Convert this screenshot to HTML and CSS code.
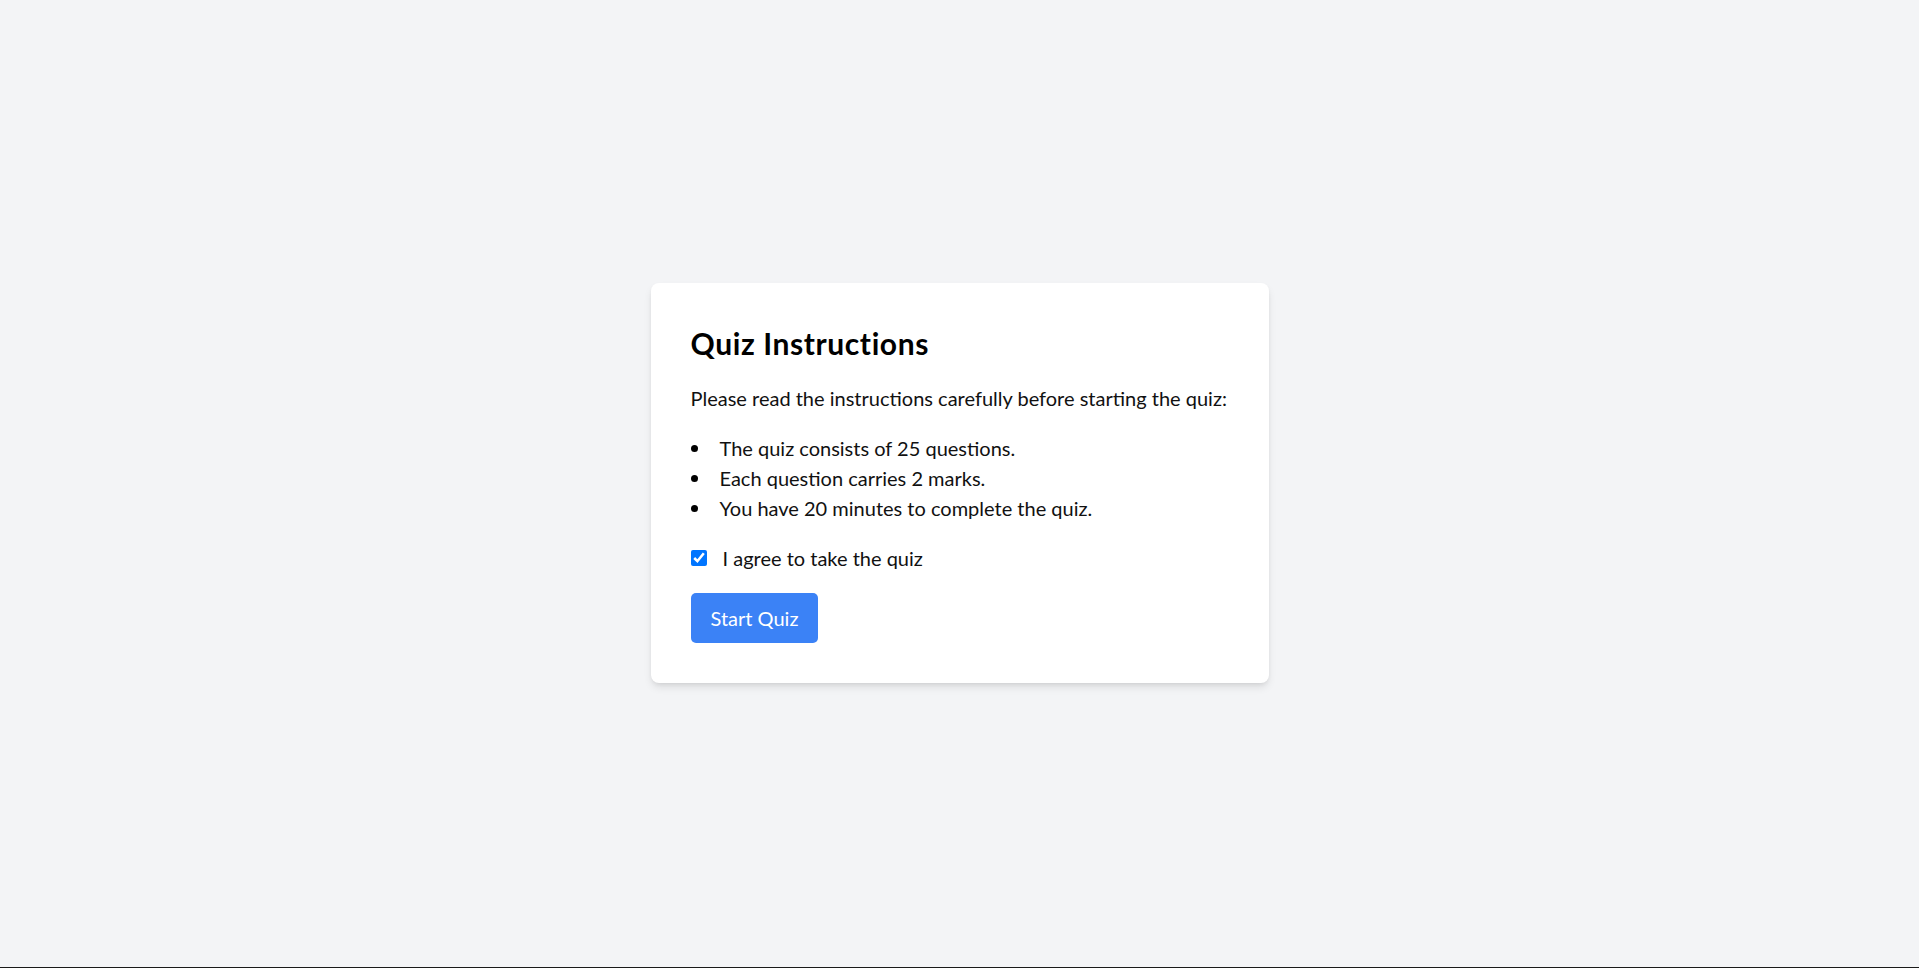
FILE: index.html
```html
<!DOCTYPE html>
<html lang="en">
<head>
<meta charset="utf-8">
<title>Quiz Instructions</title>
<link rel="stylesheet" href="styles.css">
</head>
<body>
  <main class="page">
    <section class="card">
      <h1 class="title">Quiz Instructions</h1>
      <p class="intro">Please read the instructions carefully before starting the quiz:</p>
      <ul class="rules">
        <li class="rule">The quiz consists of 25 questions.</li>
        <li class="rule">Each question carries 2 marks.</li>
        <li class="rule">You have 20 minutes to complete the quiz.</li>
      </ul>
      <label class="agree">
        <input type="checkbox" class="agree-box" checked>
        <span>I agree to take the quiz</span>
      </label>
      <button class="start-btn" type="button">Start Quiz</button>
    </section>
  </main>
</body>
</html>
```

FILE: styles.css
```css
* { box-sizing: border-box; }

html, body {
  margin: 0;
  padding: 0;
}

body {
  background: #f3f4f6;
  font-family: Lato, "Noto Sans", "Liberation Sans", sans-serif;
  color: #111;
  border-bottom: 1px solid #1a1a1a;
}

.page {
  height: 967px;
  padding-bottom: 1px;
  display: flex;
  align-items: center;
  justify-content: center;
}

.card {
  width: 618px;
  background: #fff;
  border-radius: 8px;
  padding: 40px;
  box-shadow: 0 5px 8px -1px rgba(0,0,0,0.1), 0 2px 5px -2px rgba(0,0,0,0.1);
  display: flex;
  flex-direction: column;
  align-items: flex-start;
}

.title {
  margin: 0 0 20px;
  font-size: 30px;
  line-height: 40px;
  font-weight: 700;
  letter-spacing: 0.6px;
  color: #000;
}

.intro {
  margin: 0 0 20px;
  font-size: 20px;
  line-height: 30px;
}

.rules {
  margin: 0 0 20px;
  padding: 0;
  list-style: none;
  font-size: 20px;
  line-height: 30px;
}

.rule {
  display: flex;
  align-items: center;
}

.rule::before {
  content: "";
  flex: none;
  width: 7px;
  height: 7px;
  border-radius: 50%;
  background: #000;
  margin: 0 22px 0 0;
}

.agree {
  display: flex;
  align-items: center;
  font-size: 20px;
  line-height: 30px;
  margin-bottom: 20px;
}

.agree-box {
  width: 16px;
  height: 16px;
  margin: 0 16px 0 0;
}

.start-btn {
  font-family: inherit;
  font-size: 20px;
  line-height: 30px;
  color: #fff;
  background: #3b82f6;
  border: none;
  border-radius: 5px;
  padding: 10px 20px;
  cursor: pointer;
}
```
